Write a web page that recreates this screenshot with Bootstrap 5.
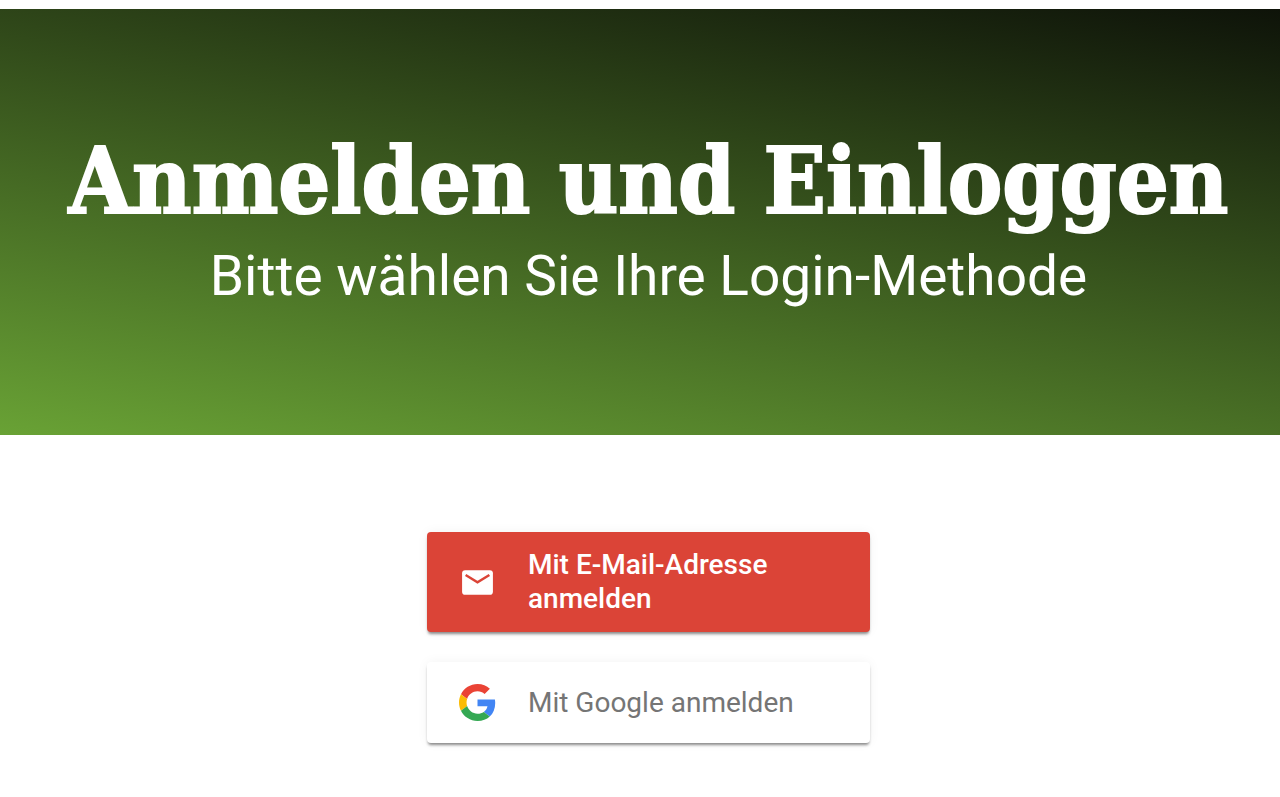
<!DOCTYPE html>
<html lang="de">
<head>
<meta charset="utf-8">
<meta name="viewport" content="width=device-width, initial-scale=1">
<title>Anmelden und Einloggen</title>
<link href="https://cdn.jsdelivr.net/npm/bootstrap@5.3.0/dist/css/bootstrap.min.css" rel="stylesheet">
<style>
body { font-family: Roboto, "Liberation Sans", sans-serif; background: #fff; }
.page-top { height: 9px; }
.hero { padding: 116px 0 120px 17px; background: linear-gradient(10deg, #69a235, #0e1309); }
.hero h1 { font-family: "Roboto Slab", "DejaVu Serif Condensed", "DejaVu Serif", serif; font-weight: 700; font-size: 91px; line-height: 112px; -webkit-text-stroke: 2px #fff; }
.hero p { font-size: 55px; line-height: 78px; }
.login-area { padding: 97px 0 48px 17px; }
.login-list { width: 443px; max-width: 100%; gap: 30px; }
.login-btn { font-size: 28px; line-height: 34px; padding: 16px 32px; gap: 32px; border: 0; border-radius: 4px; box-shadow: 0 3px 3px -1px rgba(0,0,0,.45), 0 0 12px rgba(0,0,0,.05); }
.login-btn svg { width: 37px; height: 37px; }
.login-mail { background: #db4437; color: #fff; }
.login-google { background: #fff; color: #757575; min-height: 81px; }
</style>
</head>
<body>
<div class="page-top"></div>
<header class="hero text-center text-white">
<h1 class="mb-0 text-nowrap">Anmelden und Einloggen</h1>
<p class="mb-0">Bitte wählen Sie Ihre Login-Methode</p>
</header>
<main class="login-area d-flex justify-content-center">
<div class="login-list d-flex flex-column">
<button type="button" class="login-btn login-mail d-flex align-items-center text-start fw-medium">
<svg class="flex-shrink-0" viewBox="0 0 24 24" aria-hidden="true"><rect x="2" y="4" width="20" height="16" rx="2" fill="currentColor"/><path d="M4.300 7.100L12 11.900l7.700-4.800" fill="none" stroke="#db4437" stroke-width="1.600"/></svg>
<span>Mit E-Mail-Adresse<br>anmelden</span>
</button>
<button type="button" class="login-btn login-google d-flex align-items-center text-start">
<svg class="flex-shrink-0" viewBox="0 0 48 48" aria-hidden="true">
<path fill="#ea4335" d="M24 9.500c3.540 0 6.710 1.220 9.210 3.600l6.850-6.850C35.900 2.380 30.470 0 24 0 14.620 0 6.510 5.380 2.560 13.220l7.980 6.190C12.430 13.720 17.740 9.500 24 9.500z"/>
<path fill="#4285f4" d="M46.980 24.550c0-1.570-.15-3.090-.38-4.550H24v9.020h12.940c-.58 2.960-2.260 5.480-4.780 7.180l7.730 6c4.510-4.180 7.090-10.360 7.090-17.650z"/>
<path fill="#fbbc05" d="M10.530 28.590c-.48-1.450-.76-2.990-.76-4.590s.27-3.140.76-4.590l-7.980-6.190C.92 16.460 0 20.120 0 24s.92 7.540 2.560 10.780l7.970-6.190z"/>
<path fill="#34a853" d="M24 48c6.480 0 11.930-2.130 15.890-5.810l-7.730-6c-2.150 1.450-4.920 2.300-8.160 2.300-6.260 0-11.570-4.220-13.470-9.910l-7.980 6.190C6.510 42.620 14.620 48 24 48z"/>
</svg>
<span>Mit Google anmelden</span>
</button>
</div>
</main>
<script src="https://cdn.jsdelivr.net/npm/bootstrap@5.3.0/dist/js/bootstrap.bundle.min.js"></script>
</body>
</html>
